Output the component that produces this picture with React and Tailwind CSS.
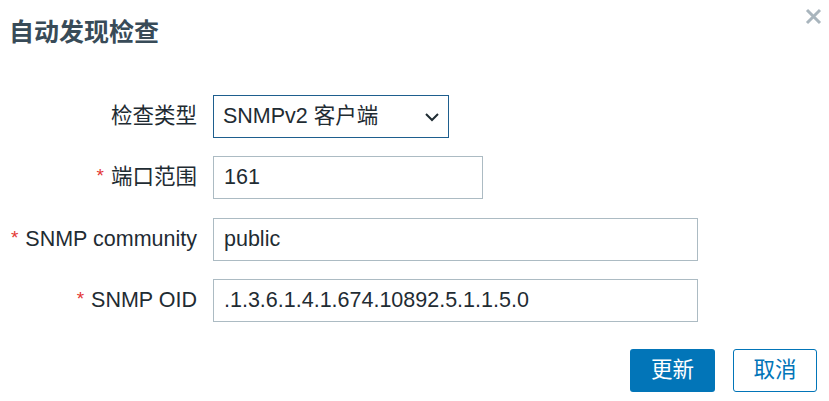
import React from "react";

const font = { fontFamily: '"Liberation Sans", Arial, "Noto Sans CJK SC", sans-serif' };

function Label({ required, children }) {
  return (
    <div className="w-[197px] shrink-0 flex justify-end items-center text-[21.5px] text-[#1f2c33]">
      {required && <span className="text-[#e33734] mr-[7px] text-[19px] relative top-[-1px]">*</span>}
      <span>{children}</span>
    </div>
  );
}

function Input({ value, width }) {
  return (
    <div
      className={`${width} h-[43px] border border-[#acbbc3] bg-white flex items-center px-[10px] text-[21.5px] text-[#1f2c33]`}
    >
      {value}
    </div>
  );
}

export default function App() {
  return (
    <div style={font} className="w-[829px] h-[401px] bg-white relative overflow-hidden">
      <div className="h-[64px] flex items-center px-[9px]">
        <h1 className="text-[25px] font-bold leading-[25px] text-[#384b58]">自动发现检查</h1>
      </div>
      <button className="absolute left-[803px] top-[6px] w-[20px] h-[20px] flex items-center justify-center">
        <svg width="17" height="17" viewBox="0 0 17 17">
          <path d="M2 2 L15 15 M15 2 L2 15" stroke="#a9b5bd" strokeWidth="3" strokeLinecap="butt" />
        </svg>
      </button>

      <div className="flex flex-col mt-[31px]">
        <div className="flex items-center gap-[16px]">
          <Label>检查类型</Label>
          <div className="w-[236px] h-[43px] border border-[#1e5e8e] bg-white flex items-center justify-between pl-[9px] pr-[8px] text-[21.5px] text-[#1f2c33]">
            <span>SNMPv2 客户端</span>
            <svg width="16" height="10" viewBox="0 0 16 10">
              <path d="M2 2 L8 8 L14 2" fill="none" stroke="#1f2c33" strokeWidth="2" />
            </svg>
          </div>
        </div>
        <div className="flex items-center gap-[16px] mt-[18px]">
          <Label required>端口范围</Label>
          <Input value="161" width="w-[270px]" />
        </div>
        <div className="flex items-center gap-[16px] mt-[19px]">
          <Label required>SNMP community</Label>
          <Input value="public" width="w-[485px]" />
        </div>
        <div className="flex items-center gap-[16px] mt-[18px]">
          <Label required>SNMP OID</Label>
          <Input value=".1.3.6.1.4.1.674.10892.5.1.1.5.0" width="w-[485px]" />
        </div>
      </div>

      <div className="flex justify-end gap-[18px] pr-[12px] mt-[27px]">
        <button className="w-[85px] h-[43px] rounded-[3px] bg-[#0275b8] text-white text-[21.5px] flex items-center justify-center">
          更新
        </button>
        <button className="w-[84px] h-[43px] rounded-[3px] border border-[#0275b8] bg-white text-[#0275b8] text-[21.5px] flex items-center justify-center">
          取消
        </button>
      </div>
    </div>
  );
}
